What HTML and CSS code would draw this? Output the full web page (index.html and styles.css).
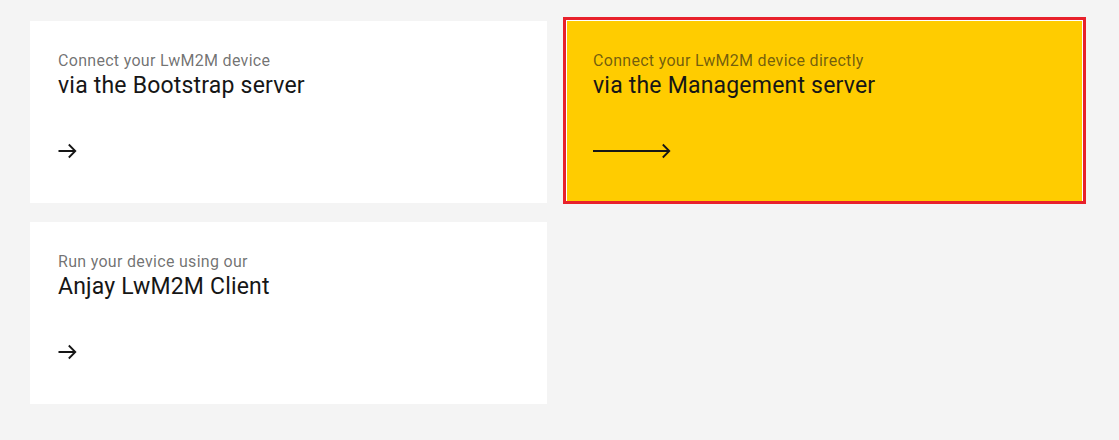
FILE: index.html
```html
<!DOCTYPE html>
<html lang="en">
<head>
<meta charset="utf-8">
<title>Connect your device</title>
<link rel="stylesheet" href="styles.css">
</head>
<body>
<main class="tiles">
  <a class="tile" href="#">
    <span class="tile-label">Connect your LwM2M device</span>
    <span class="tile-title">via the Bootstrap server</span>
    <svg class="tile-arrow" width="20" height="16" viewBox="0 0 20 16" aria-hidden="true">
      <path d="M0.5 8H17.5M10.8 1.5L17.3 8L10.8 14.5" fill="none" stroke="#161616" stroke-width="1.8"/>
    </svg>
  </a>
  <a class="tile tile-active" href="#">
    <span class="tile-label">Connect your LwM2M device directly</span>
    <span class="tile-title">via the Management server</span>
    <svg class="tile-arrow" width="80" height="16" viewBox="0 0 80 16" aria-hidden="true">
      <path d="M0 8H76.5M69.8 1.5L76.3 8L69.8 14.5" fill="none" stroke="#161616" stroke-width="1.8"/>
    </svg>
  </a>
  <a class="tile" href="#">
    <span class="tile-label">Run your device using our</span>
    <span class="tile-title">Anjay LwM2M Client</span>
    <svg class="tile-arrow" width="20" height="16" viewBox="0 0 20 16" aria-hidden="true">
      <path d="M0.5 8H17.5M10.8 1.5L17.3 8L10.8 14.5" fill="none" stroke="#161616" stroke-width="1.8"/>
    </svg>
  </a>
</main>
</body>
</html>
```

FILE: styles.css
```css
html, body {
  margin: 0;
  padding: 0;
  background: #f4f4f4;
  height: 100%;
}

body {
  font-family: Roboto, "Liberation Sans", Arial, sans-serif;
  color: #161616;
}

.tiles {
  display: grid;
  grid-template-columns: 517px 517px;
  grid-auto-rows: 182px;
  column-gap: 19px;
  row-gap: 19px;
  padding: 21px 0 0 30px;
}

.tile {
  display: flex;
  flex-direction: column;
  align-items: flex-start;
  box-sizing: border-box;
  padding: 30px 28px 0 28px;
  background: #ffffff;
  text-decoration: none;
  color: #161616;
}

.tile-label {
  font-size: 16px;
  line-height: 20px;
  letter-spacing: 0.3px;
  color: rgba(22, 22, 22, 0.62);
}

.tile-title {
  margin-top: 1px;
  font-size: 23px;
  line-height: 28px;
  letter-spacing: 0.2px;
  color: #161616;
}

.tile-arrow {
  display: block;
  margin-top: 43px;
}

.tile-active {
  align-self: start;
  height: 181px;
  margin-top: -1px;
  padding-top: 30px;
  padding-left: 26px;
  background: #ffcc00;
  border: 1px solid #ffffff;
  border-bottom: 0;
  outline: 3px solid #e8212b;
}
```
